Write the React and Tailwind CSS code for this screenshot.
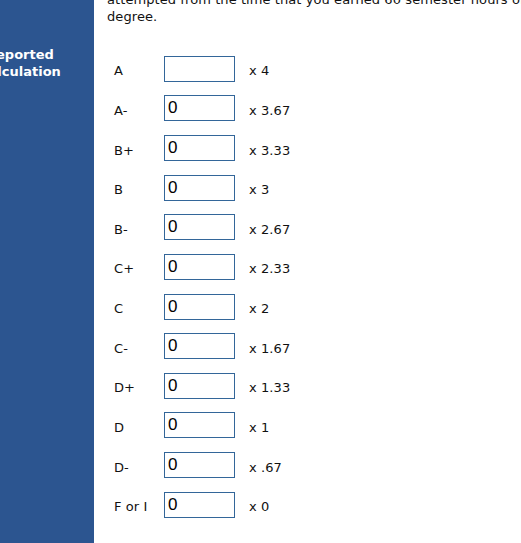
import { useState } from 'react';

// grade letter → multiplier, starting value of the hours box
const GRADES = [
  { label: 'A', mult: 'x 4', value: '' },
  { label: 'A-', mult: 'x 3.67', value: '0' },
  { label: 'B+', mult: 'x 3.33', value: '0' },
  { label: 'B', mult: 'x 3', value: '0' },
  { label: 'B-', mult: 'x 2.67', value: '0' },
  { label: 'C+', mult: 'x 2.33', value: '0' },
  { label: 'C', mult: 'x 2', value: '0' },
  { label: 'C-', mult: 'x 1.67', value: '0' },
  { label: 'D+', mult: 'x 1.33', value: '0' },
  { label: 'D', mult: 'x 1', value: '0' },
  { label: 'D-', mult: 'x .67', value: '0' },
  { label: 'F or I', mult: 'x 0', value: '0' },
];

function GradeRow({ label, mult, initial }) {
  const [val, setVal] = useState(initial);
  return (
    <div className="h-[39.64px] flex items-center">
      <span className="w-[57px] shrink-0 pl-[7px] mt-[4px] whitespace-nowrap">{label}</span>
      <input
        value={val}
        onChange={(e) => setVal(e.target.value)}
        className="w-[71px] h-[26px] border border-[#336699] px-[3px] text-[17px] text-black outline-none bg-white"
        style={{ fontFamily: '"Liberation Sans", Arial, sans-serif' }}
      />
      <span className="ml-[14px] mt-[4px]">{mult}</span>
    </div>
  );
}

export default function App() {
  return (
    <div
      className="h-[543px] w-[521px] overflow-hidden flex bg-white text-[13px] leading-[17px] tracking-[0.08px] text-[#111]"
      style={{ fontFamily: '"DejaVu Sans", Verdana, sans-serif' }}
    >
      {/* ── Left sidebar ─────────────────────────────────────── */}
      <aside className="w-[94px] shrink-0 bg-[#2c5590] text-white font-bold overflow-hidden pt-[46px] tracking-normal">
        <div className="whitespace-nowrap -ml-[14px]">Reported</div>
        <div className="whitespace-nowrap -ml-[21px]">Calculation</div>
      </aside>

      {/* ── Main content ─────────────────────────────────────── */}
      <main className="flex-1 min-w-0 pl-[13px] overflow-hidden">
        <p className="-mt-[9px] whitespace-nowrap">
          attempted from the time that you earned 60 semester hours of
          <br />
          degree.
        </p>

        <div className="mt-[24px]">
          {GRADES.map((g) => (
            <GradeRow key={g.label} label={g.label} mult={g.mult} initial={g.value} />
          ))}
        </div>
      </main>
    </div>
  );
}
